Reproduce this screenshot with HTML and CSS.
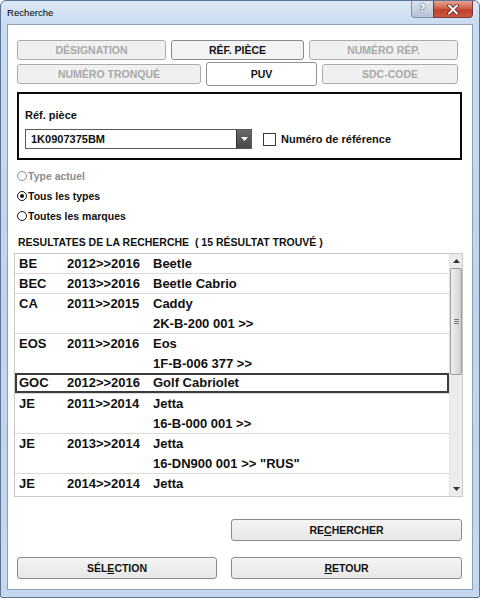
FILE: index.html
```html
<!DOCTYPE html>
<html lang="fr">
<head>
<meta charset="utf-8">
<title>Recherche</title>
<link rel="stylesheet" href="styles.css">
</head>
<body>
<div class="window">
  <div class="titlebar">
    <span class="title">Recherche</span>
    <div class="caption-btns">
      <span class="cap-help">?</span>
      <span class="cap-close">
        <svg width="14" height="11" viewBox="0 0 14 11"><path d="M3 1.5 L11 9.5 M11 1.5 L3 9.5" stroke="#6b2020" stroke-width="3.6" stroke-linecap="round"/><path d="M3 1.5 L11 9.5 M11 1.5 L3 9.5" stroke="#fff" stroke-width="2" stroke-linecap="round"/></svg>
      </span>
    </div>
  </div>
  <div class="client">
    <div class="tabs">
      <div class="tab-row row1">
        <div class="tab disabled">DÉSIGNATION</div>
        <div class="tab active">RÉF. PIÈCE</div>
        <div class="tab disabled">NUMÉRO RÉP.</div>
      </div>
      <div class="tab-row row2">
        <div class="tab disabled">NUMÉRO TRONQUÉ</div>
        <div class="tab selected">PUV</div>
        <div class="tab disabled">SDC-CODE</div>
      </div>
    </div>

    <div class="refbox">
      <div class="ref-label">Réf. pièce</div>
      <div class="ref-controls">
        <div class="combo">
          <span class="combo-value">1K0907375BM</span>
          <span class="combo-btn"><svg width="7" height="4" viewBox="0 0 7 4"><path d="M0 0 H7 L3.5 4 Z" fill="#fff"/></svg></span>
        </div>
        <label class="check"><span class="check-box"></span><span>Numéro de référence</span></label>
      </div>
    </div>

    <div class="radios">
      <div class="radio disabled"><span class="dot"></span>Type actuel</div>
      <div class="radio checked"><span class="dot"></span>Tous les types</div>
      <div class="radio"><span class="dot"></span>Toutes les marques</div>
    </div>

    <div class="heading">RESULTATES DE LA RECHERCHE&nbsp; ( 15 RÉSULTAT TROUVÉ )</div>

    <div class="list">
      <div class="rows">
        <div class="row"><span>BE</span><span>2012&gt;&gt;2016</span><span>Beetle</span></div>
        <div class="row"><span>BEC</span><span>2013&gt;&gt;2016</span><span>Beetle Cabrio</span></div>
        <div class="row double"><span>CA</span><span>2011&gt;&gt;2015</span><span>Caddy<br>2K-B-200 001 &gt;&gt;</span></div>
        <div class="row double"><span>EOS</span><span>2011&gt;&gt;2016</span><span>Eos<br>1F-B-006 377 &gt;&gt;</span></div>
        <div class="row selected"><span>GOC</span><span>2012&gt;&gt;2016</span><span>Golf Cabriolet</span></div>
        <div class="row double"><span>JE</span><span>2011&gt;&gt;2014</span><span>Jetta<br>16-B-000 001 &gt;&gt;</span></div>
        <div class="row double"><span>JE</span><span>2013&gt;&gt;2014</span><span>Jetta<br>16-DN900 001 &gt;&gt; "RUS"</span></div>
        <div class="row last"><span>JE</span><span>2014&gt;&gt;2014</span><span>Jetta</span></div>
      </div>
      <div class="scrollbar">
        <div class="sb-arrow up"><svg width="7" height="4" viewBox="0 0 7 4"><path d="M0 4 H7 L3.5 0 Z" fill="#333"/></svg></div>
        <div class="sb-track">
          <div class="sb-thumb"><span class="grip"></span></div>
        </div>
        <div class="sb-arrow down"><svg width="7" height="4" viewBox="0 0 7 4"><path d="M0 0 H7 L3.5 4 Z" fill="#333"/></svg></div>
      </div>
    </div>

    <div class="actions">
      <div class="btn btn-search">RE<u>C</u>HERCHER</div>
      <div class="btn btn-select">SÉL<u>E</u>CTION</div>
      <div class="btn btn-back"><u>R</u>ETOUR</div>
    </div>
  </div>
</div>
</body>
</html>
```

FILE: styles.css
```css
* { box-sizing: border-box; }

html, body {
  margin: 0;
  padding: 0;
  background: #ffffff;
}

body {
  font-family: "Liberation Sans", Arial, sans-serif;
  color: #111;
}

.window {
  width: 480px;
  height: 598px;
  border: 1px solid #5d7493;
  border-radius: 6px 6px 2px 2px;
  background: linear-gradient(180deg, #dce8f6 0px, #c9dbf1 24px, #bfd3ec 300px, #c6d8ef 598px);
  display: flex;
  flex-direction: column;
  overflow: hidden;
}

.titlebar {
  height: 23px;
  display: flex;
  justify-content: space-between;
  align-items: flex-start;
  padding-left: 6px;
  padding-right: 6px;
}

.title {
  font-size: 9.6px;
  line-height: 23px;
  color: #000;
  font-family: "Liberation Sans", Arial, sans-serif;
}

.caption-btns {
  display: flex;
  height: 17px;
}

.cap-help {
  width: 22px;
  height: 17px;
  border: 1px solid #7f8fa6;
  border-top: none;
  border-right: none;
  border-radius: 0 0 0 4px;
  background: linear-gradient(180deg, #dbe3ee, #b6c3d5);
  color: #fff;
  font-family: "DejaVu Sans", sans-serif;
  font-weight: bold;
  font-size: 11px;
  line-height: 15px;
  text-align: center;
  text-shadow: 0 0 2px #4b5d78, 0 0 1px #4b5d78;
}

.cap-close {
  width: 40px;
  height: 17px;
  border: 1px solid #7b3a3a;
  border-top: none;
  border-radius: 0 0 4px 0;
  background: linear-gradient(180deg, #e6a393 0px, #d0634f 7px, #c0402c 9px, #cd5a45 17px);
  display: flex;
  align-items: center;
  justify-content: center;
}

.client {
  margin: 0 6px;
  height: 566px;
  background: #fff;
  border: 1px solid #8a9fbc;
  padding: 15px 0 0 9px;
}

/* tabs */
.tabs {
  width: 441px;
  display: flex;
  flex-direction: column;
  gap: 4px;
}

.tab-row {
  display: flex;
  gap: 5px;
  height: 20px;
  align-items: center;
}

.row1 .tab:nth-child(1) { width: 149px; }
.row1 .tab:nth-child(2) { width: 133px; }
.row1 .tab:nth-child(3) { width: 149px; }
.row2 .tab:nth-child(1) { width: 184px; }
.row2 .tab:nth-child(2) { width: 111px; }
.row2 .tab:nth-child(3) { width: 136px; }

.tab {
  height: 20px;
  border: 1px solid #ababab;
  border-radius: 3px;
  background: #f0f0f0;
  font-size: 10.5px;
  font-weight: bold;
  line-height: 18px;
  text-align: center;
  white-space: nowrap;
}

.tab.disabled {
  color: #a8a8a8;
}

.tab.active {
  color: #111;
  border-color: #8a8a8a;
  background: #f3f3f3;
}

.tab.selected {
  height: 24px;
  line-height: 22px;
  background: #fff;
  color: #111;
  border-color: #8f8f8f;
}

/* reference box */
.refbox {
  margin-top: 8px;
  width: 445px;
  height: 68px;
  border: 2px solid #0a0a0a;
  padding: 14px 0 0 6px;
}

.ref-label {
  font-size: 11px;
  font-weight: bold;
  line-height: 14px;
}

.ref-controls {
  margin-top: 7px;
  display: flex;
  align-items: center;
}

.combo {
  width: 227px;
  height: 20px;
  border: 1px solid #5a5a5a;
  background: #fff;
  display: flex;
  align-items: center;
  justify-content: space-between;
  padding-left: 5px;
}

.combo-value {
  font-size: 11px;
  font-weight: bold;
}

.combo-btn {
  width: 15px;
  height: 18px;
  background: linear-gradient(180deg, #6a6a6a, #474747);
  border-left: 1px solid #333;
  display: flex;
  align-items: center;
  justify-content: center;
}

.check {
  margin-left: 11px;
  display: flex;
  align-items: center;
  gap: 5px;
  font-size: 11px;
  font-weight: bold;
}

.check-box {
  width: 13px;
  height: 13px;
  border: 1px solid #3a3a3a;
  background: #fff;
}

/* radios */
.radios {
  margin-top: 6px;
  display: flex;
  flex-direction: column;
}

.radio {
  height: 20px;
  display: flex;
  align-items: center;
  font-size: 10.5px;
  font-weight: bold;
  color: #111;
}

.radio .dot {
  width: 10px;
  height: 10px;
  border: 1.5px solid #111;
  border-radius: 50%;
  margin-right: 1px;
  position: relative;
  background: #fff;
}

.radio.checked .dot::after {
  content: "";
  position: absolute;
  left: 1.5px;
  top: 1.5px;
  width: 4px;
  height: 4px;
  border-radius: 50%;
  background: #111;
}

.radio.disabled {
  color: #8c8c8c;
}

.radio.disabled .dot {
  border-color: #8c8c8c;
}

/* heading */
.heading {
  margin-top: 6px;
  padding-left: 1px;
  height: 20px;
  line-height: 20px;
  font-size: 10.5px;
  font-weight: bold;
  white-space: nowrap;
}

/* list */
.list {
  margin-top: 1px;
  margin-left: -3px;
  width: 449px;
  height: 244px;
  border: 1px solid #c9c9c9;
  display: flex;
  overflow: hidden;
}

.rows {
  flex: 1;
  overflow: hidden;
}

.row {
  display: grid;
  grid-template-columns: 48px 86px 1fr;
  padding-left: 4px;
  font-size: 13px;
  font-weight: bold;
  line-height: 19px;
  border-bottom: 1px solid #dadada;
  white-space: nowrap;
}

.row.double {
  line-height: 19.5px;
}

.row.last {
  border-bottom: none;
}

.row.selected {
  box-shadow: inset 0 0 0 2px #3c3c3c;
  line-height: 20px;
  margin-top: -1px;
  padding-top: 0;
}

.scrollbar {
  width: 13px;
  background: #ececec;
  display: flex;
  flex-direction: column;
  border-left: 1px solid #e2e2e2;
}

.sb-arrow {
  height: 14px;
  display: flex;
  align-items: center;
  justify-content: center;
}

.sb-track {
  flex: 1;
}

.sb-thumb {
  height: 107px;
  border: 1px solid #9c9c9c;
  border-radius: 2px;
  background: linear-gradient(90deg, #f1f1f1, #dedede 60%, #cfcfcf);
  display: flex;
  align-items: center;
  justify-content: center;
}

.grip {
  width: 5px;
  height: 5px;
  border-top: 1px solid #7a7a7a;
  border-bottom: 1px solid #7a7a7a;
  position: relative;
}

.grip::after {
  content: "";
  position: absolute;
  left: 0;
  right: 0;
  top: 1px;
  border-top: 1px solid #7a7a7a;
}

/* buttons */
.actions {
  margin-top: 22px;
  width: 445px;
  display: grid;
  grid-template-columns: 200px 231px;
  column-gap: 14px;
  row-gap: 16px;
}

.btn {
  height: 22px;
  border: 1px solid #8b8b8b;
  border-radius: 3px;
  background: linear-gradient(180deg, #f4f4f4, #e7e7e7);
  font-size: 10.5px;
  font-weight: bold;
  line-height: 20px;
  text-align: center;
  color: #111;
}

.btn-search {
  grid-column: 2;
}

.btn-select {
  grid-column: 1;
}

.btn-back {
  grid-column: 2;
}
```
